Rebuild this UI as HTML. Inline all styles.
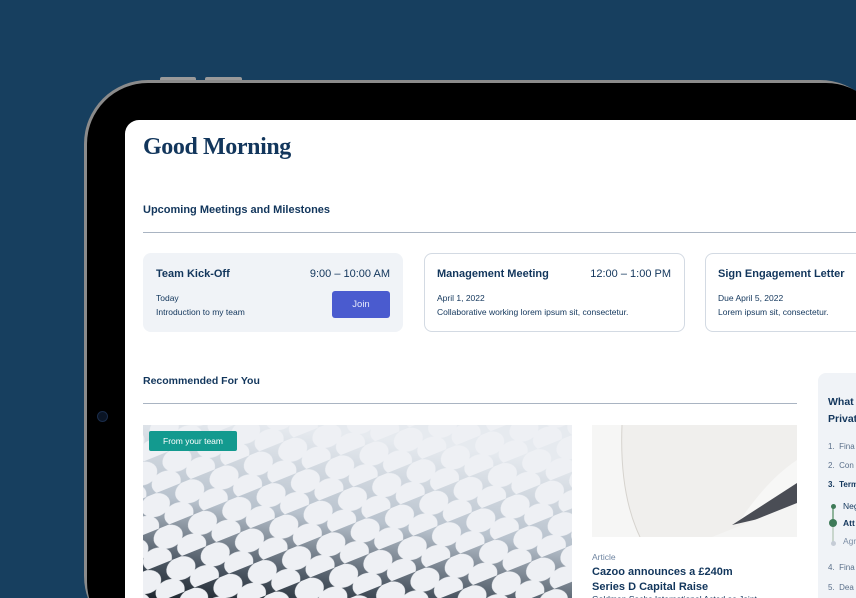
<!DOCTYPE html>
<html style="width:856px;height:598px;overflow:hidden"><head><meta charset="utf-8"><style>
*{margin:0;padding:0;box-sizing:border-box}
body{width:856px;height:598px;overflow:hidden;background:#173f5f;font-family:"Liberation Sans",sans-serif;color:#12365c}
#w{position:relative;width:856px;height:598px;overflow:hidden}
.a{position:absolute;white-space:nowrap}
.b{font-weight:bold}
.card{position:absolute;top:253px;height:79px;border-radius:8px}
.card .t{position:absolute;left:13px;top:15px;font-size:11px;font-weight:bold}
.card .tm{position:absolute;right:13px;top:15px;font-size:11px}
.card .l{position:absolute;left:13px;font-size:8.5px}
</style></head><body><div id="w">
<div class="a" style="left:160px;top:77px;width:36px;height:5px;background:#9a9a9a;border-radius:2px"></div>
<div class="a" style="left:205px;top:77px;width:37px;height:5px;background:#9a9a9a;border-radius:2px"></div>
<div class="a" style="left:84px;top:80px;width:800px;height:560px;border-radius:64px;background:#8b8b8b"></div>
<div class="a" style="left:87px;top:83px;width:800px;height:560px;border-radius:61px;background:#000"></div>
<div class="a" style="left:97px;top:411px;width:11px;height:11px;border-radius:50%;background:#0a1424;border:1px solid #1a2c4a"></div>
<div class="a" style="left:125px;top:120px;width:780px;height:520px;border-radius:14px;background:#fff"></div>

<div class="a" style="left:143px;top:134px;font-family:'Liberation Serif',serif;font-size:24px;font-weight:bold;letter-spacing:-0.4px">Good Morning</div>
<div class="a b" style="left:143px;top:204px;font-size:11px">Upcoming Meetings and Milestones</div>
<div class="a" style="left:143px;top:232px;width:713px;height:1px;background:#a9b4c2"></div>

<div class="card" style="left:143px;width:260px;background:#f0f3f7">
<div class="t">Team Kick-Off</div><div class="tm">9:00 – 10:00 AM</div>
<div class="l" style="top:40px">Today</div><div class="l" style="top:54px">Introduction to my team</div>
<div class="a" style="left:189px;top:38px;width:58px;height:27px;background:#4a5bcf;border-radius:3px;color:#e6e9fb;font-size:9.5px;text-align:center;line-height:27px">Join</div>
</div>
<div class="card" style="left:424px;width:261px;border:1px solid #d3dae3">
<div class="t" style="left:12px;top:14px">Management Meeting</div><div class="tm" style="top:14px">12:00 – 1:00 PM</div>
<div class="l" style="left:12px;top:39px">April 1, 2022</div><div class="l" style="left:12px;top:53px">Collaborative working lorem ipsum sit, consectetur.</div>
</div>
<div class="card" style="left:705px;width:200px;border:1px solid #d3dae3">
<div class="t" style="left:12px;top:14px">Sign Engagement Letter</div>
<div class="l" style="left:12px;top:39px">Due April 5, 2022</div><div class="l" style="left:12px;top:53px">Lorem ipsum sit, consectetur.</div>
</div>

<div class="a b" style="left:143px;top:375px;font-size:10.5px">Recommended For You</div>
<div class="a" style="left:143px;top:403px;width:654px;height:1px;background:#a9b4c2"></div>

<svg class="a" style="left:143px;top:425px" width="429" height="173">
<defs>
<linearGradient id="g" x1="0.3" y1="0" x2="0" y2="1"><stop offset="0" stop-color="#e6eaef"/><stop offset="0.45" stop-color="#b8c2cd"/><stop offset="0.8" stop-color="#4a5561"/><stop offset="1" stop-color="#1e262e"/></linearGradient>
<pattern id="p" width="37" height="34" patternUnits="userSpaceOnUse" patternTransform="rotate(-22)">
<ellipse cx="18.5" cy="11" rx="15" ry="11.5" fill="#eef0f4"/><ellipse cx="0" cy="28" rx="15" ry="11.5" fill="#eef0f4"/><ellipse cx="37" cy="28" rx="15" ry="11.5" fill="#eef0f4"/>
</pattern></defs>
<rect width="429" height="173" fill="url(#g)"/>
<rect width="429" height="173" fill="url(#p)"/>
</svg>
<div class="a" style="left:149px;top:431px;width:88px;height:20px;background:#139a8f;border-radius:2px;color:#fff;font-size:8.5px;line-height:20px;text-align:center">From your team</div>

<svg class="a" style="left:592px;top:425px" width="205" height="112">
<rect width="205" height="112" fill="#f0efed"/>
<path d="M30 0 C28 50 35 85 48 112 H0 V0 Z" fill="#f6f6f5"/>
<path d="M30 0 C28 50 35 85 48 112" stroke="#d6d3ce" stroke-width="1" fill="none"/>
<path d="M205 0 V35 C175 55 155 85 145 100 L205 60 Z" fill="#f7f7f6"/>
<path d="M205 58 L140 100 L205 85 Z" fill="#4a4d55"/>
<path d="M205 78 L120 112 H205 Z" fill="#f4f4f3"/>
</svg>
<div class="a" style="left:592px;top:552px;font-size:8.5px;color:#6e84a0">Article</div>
<div class="a b" style="left:592px;top:565px;font-size:11px;line-height:15px">Cazoo announces a £240m<br>Series D Capital Raise</div>
<div class="a" style="left:592px;top:594px;font-size:8.5px;color:#12365c">Goldman Sachs International Acted as Joint</div>

<div class="a" style="left:818px;top:373px;width:60px;height:240px;background:#f0f3f7;border-radius:8px"></div>
<div class="a b" style="left:828px;top:394px;font-size:10.5px;line-height:17px">What<br>Privat</div>
<div class="a" style="left:828px;top:442px;font-size:8px;color:#5a6f8a">1.&nbsp; Fina</div>
<div class="a" style="left:828px;top:461px;font-size:8px;color:#5a6f8a">2.&nbsp; Con</div>
<div class="a b" style="left:828px;top:480px;font-size:8px">3.&nbsp; Term</div>
<div class="a" style="left:832px;top:506px;width:2px;height:38px;background:#c9d6cd"></div>
<div class="a" style="left:832px;top:506px;width:2px;height:18px;background:#8fb49b"></div>
<div class="a" style="left:831px;top:504px;width:5px;height:5px;border-radius:50%;background:#3e7a58"></div>
<div class="a" style="left:829px;top:519px;width:8px;height:8px;border-radius:50%;background:#3e7a58"></div>
<div class="a" style="left:831px;top:541px;width:5px;height:5px;border-radius:50%;background:#c5ccd6"></div>
<div class="a" style="left:843px;top:501px;font-size:8.5px">Neg</div>
<div class="a b" style="left:843px;top:518px;font-size:8.5px">Att</div>
<div class="a" style="left:843px;top:536px;font-size:8.5px;color:#7d8ea5">Agr</div>
<div class="a" style="left:828px;top:563px;font-size:8px;color:#5a6f8a">4.&nbsp; Fina</div>
<div class="a" style="left:828px;top:583px;font-size:8px;color:#5a6f8a">5.&nbsp; Dea</div>
</div></body></html>
